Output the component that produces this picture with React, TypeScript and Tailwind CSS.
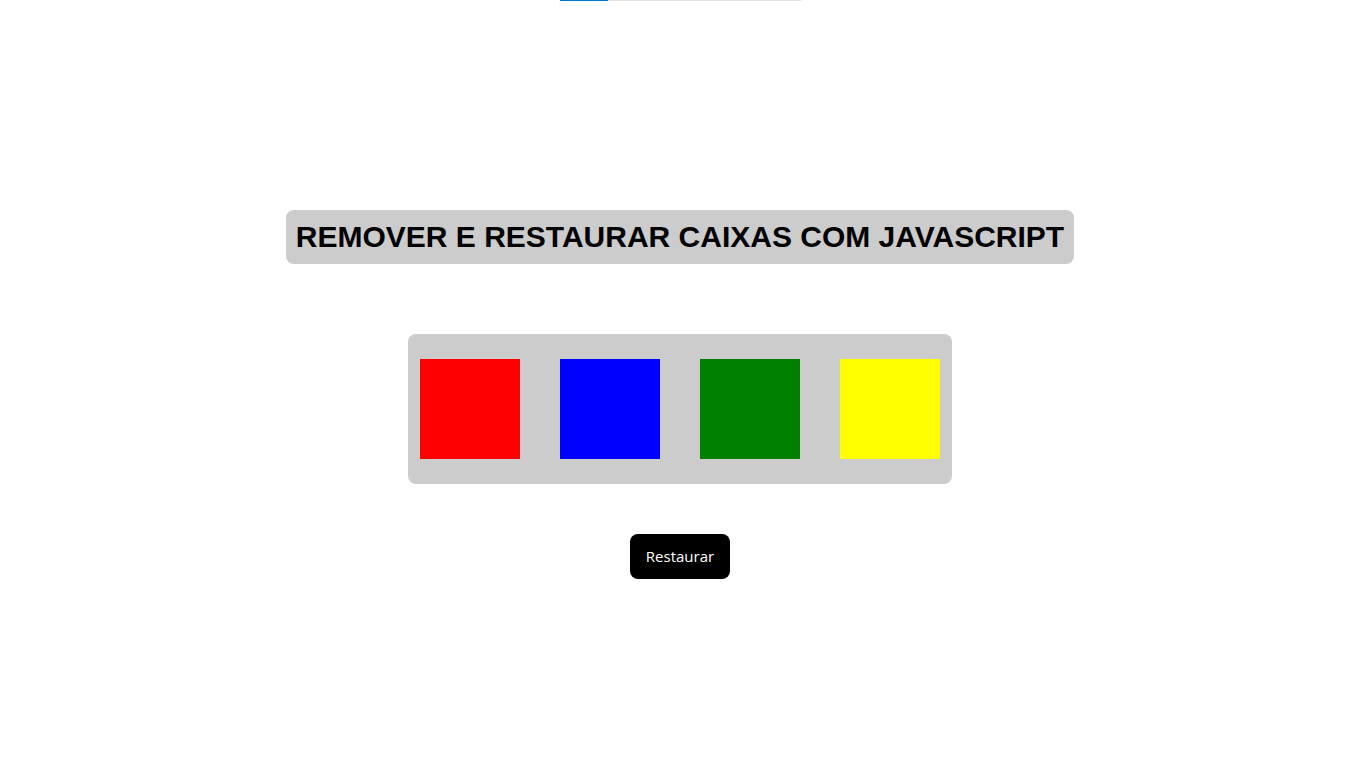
import React from "react";

const CORES = ["bg-[#ff0000]", "bg-[#0000ff]", "bg-[#008000]", "bg-[#ffff00]"];

export default function App() {
  return (
    <div className="min-h-screen w-full bg-white flex flex-col items-center">
      <div className="flex w-[241px] h-px">
        <div className="w-[48px] bg-[#0078d4]" />
        <div className="flex-1 bg-[#e5e5e5]" />
      </div>

      <h1
        className="mt-[209px] rounded-lg bg-[#cccccc] px-[10px] py-[10px] text-[30px] font-bold leading-[34px] text-black"
        style={{ fontFamily: '"Liberation Sans", Arial, sans-serif' }}
      >
        REMOVER E RESTAURAR CAIXAS COM JAVASCRIPT
      </h1>

      <div className="mt-[70px] flex gap-[40px] rounded-lg bg-[#cccccc] px-[12px] py-[25px]">
        {CORES.map((cor, i) => (
          <div key={i} className={`h-[100px] w-[100px] ${cor}`} />
        ))}
      </div>

      <button
        className="mt-[50px] h-[45px] w-[100px] rounded-lg bg-black text-[15px] text-white"
        style={{ fontFamily: '"Open Sans", "Noto Sans", sans-serif' }}
      >
        Restaurar
      </button>
    </div>
  );
}
